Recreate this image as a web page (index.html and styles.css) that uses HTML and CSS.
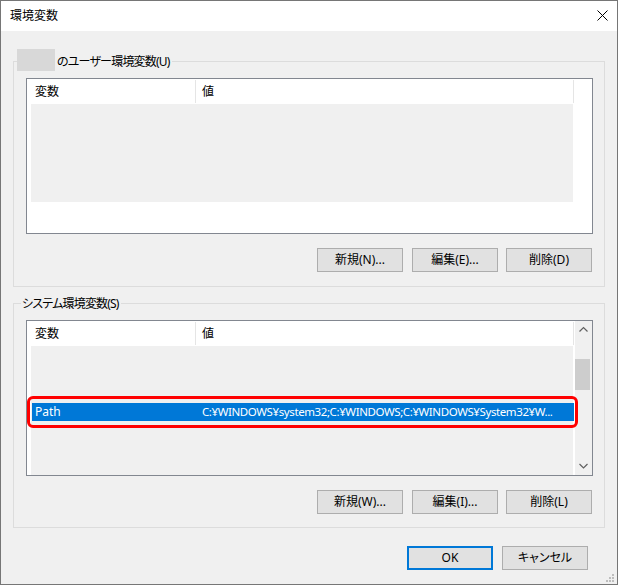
FILE: index.html
```html
<!DOCTYPE html>
<html lang="ja">
<head>
<meta charset="utf-8">
<title>環境変数</title>
<link rel="stylesheet" href="styles.css">
</head>
<body>
<div class="window">
  <div class="titlebar">
    <span class="title">環境変数</span>
    <svg class="close" width="11" height="11" viewBox="0 0 11 11" aria-hidden="true"><path d="M0.5 0.5L10.5 10.5M10.5 0.5L0.5 10.5" stroke="#000" stroke-width="1" fill="none"/></svg>
  </div>
  <div class="body">
    <fieldset class="group group-user">
      <legend class="legend legend-user"><span class="name-redact"></span><span class="legend-text">のユーザー環境変数(U)</span></legend>
      <div class="group-body">
        <div class="list">
          <div class="list-main">
            <div class="list-header">
              <div class="col col-name">変数</div>
              <div class="col col-value">値</div>
            </div>
            <div class="list-rows">
              <div class="redact redact-user"></div>
            </div>
          </div>
        </div>
        <div class="btn-row">
          <button class="btn">新規(N)...</button>
          <button class="btn">編集(E)...</button>
          <button class="btn">削除(D)</button>
        </div>
      </div>
    </fieldset>

    <fieldset class="group group-sys">
      <legend class="legend legend-sys"><span class="legend-text">システム環境変数(S)</span></legend>
      <div class="group-body">
        <div class="list list-sys">
          <div class="list-main">
            <div class="list-header">
              <div class="col col-name">変数</div>
              <div class="col col-value">値</div>
            </div>
            <div class="list-rows">
              <div class="redact redact-sys">
                <div class="row row-selected">
                  <span class="cell-name">Path</span>
                  <span class="cell-value">C:¥WINDOWS¥system32;C:¥WINDOWS;C:¥WINDOWS¥System32¥W...</span>
                </div>
              </div>
            </div>
          </div>
          <div class="scrollbar">
            <div class="sb-arrow">
              <svg width="17" height="17" viewBox="0 0 17 17" aria-hidden="true"><path d="M4.5 10.5L8.5 6.5L12.5 10.5" stroke="#606060" stroke-width="1.2" fill="none"/></svg>
            </div>
            <div class="sb-track"><div class="sb-thumb"></div></div>
            <div class="sb-arrow">
              <svg width="17" height="17" viewBox="0 0 17 17" aria-hidden="true"><path d="M4.5 6L8.5 10L12.5 6" stroke="#606060" stroke-width="1.2" fill="none"/></svg>
            </div>
          </div>
          <div class="highlight"></div>
        </div>
        <div class="btn-row">
          <button class="btn">新規(W)...</button>
          <button class="btn">編集(I)...</button>
          <button class="btn">削除(L)</button>
        </div>
      </div>
    </fieldset>
  </div>
  <div class="dialog-buttons">
    <button class="btn btn-default">OK</button>
    <button class="btn">キャンセル</button>
  </div>
  <svg class="grip" width="12" height="12" viewBox="0 0 12 12" aria-hidden="true">
    <rect x="9" y="3" width="2" height="2" fill="#bdbdbd"/>
    <rect x="6" y="6" width="2" height="2" fill="#bdbdbd"/>
    <rect x="9" y="6" width="2" height="2" fill="#bdbdbd"/>
    <rect x="3" y="9" width="2" height="2" fill="#bdbdbd"/>
    <rect x="6" y="9" width="2" height="2" fill="#bdbdbd"/>
    <rect x="9" y="9" width="2" height="2" fill="#bdbdbd"/>
  </svg>
</div>
</body>
</html>
```

FILE: styles.css
```css
* { box-sizing: border-box; }

html, body {
  margin: 0;
  padding: 0;
  background: #f0f0f0;
}

body {
  font-family: "Noto Sans", "Noto Sans CJK JP", sans-serif;
  font-size: 12px;
  line-height: 16px;
  color: #000;
  font-feature-settings: "palt";
}

.window {
  position: relative;
  width: 618px;
  height: 585px;
  border: 1px solid #767676;
  background: #f0f0f0;
  display: flex;
  flex-direction: column;
}

.titlebar {
  height: 30px;
  background: #fff;
  display: flex;
  align-items: center;
  padding-left: 9px;
  flex: none;
}

.title {
  font-size: 12px;
}

.close {
  margin-left: auto;
  margin-right: 9px;
  margin-top: -1px;
}

.body {
  padding: 0 12px;
}

.group {
  margin: 0;
  padding: 0;
  border: 1px solid #dcdcdc;
  min-width: 0;
}

.group-user { margin-top: 19px; }
.group-sys { margin-top: 5px; }

.legend {
  display: flex;
  align-items: center;
  height: 23px;
  padding: 0;
}

.legend-text {
  letter-spacing: -0.8px;
}

.legend-user { margin-left: 3px; }
.legend-sys { margin-left: 7px; padding: 0 2px 0 1px; }

.name-redact {
  align-self: flex-start;
  width: 38px;
  height: 22px;
  margin-top: -1px;
  background: #d8d8d8;
}

.legend-user .legend-text {
  padding: 0 2px 0 2px;
}

.group-body {
  padding: 5px 11px 14px 12px;
}

.group-sys .group-body {
  padding-bottom: 13px;
}

.list {
  position: relative;
  height: 156px;
  border: 1px solid #828790;
  background: #fff;
  display: flex;
}

.list-main {
  width: 548px;
  display: flex;
  flex-direction: column;
}

.list-header {
  height: 25px;
  display: flex;
  flex: none;
}

.col {
  display: flex;
  align-items: center;
  border-right: 1px solid #e5e5e5;
  margin: 1px 0;
}

.col-name {
  width: 169px;
  padding-left: 8px;
}

.col-value {
  width: 378px;
  padding-left: 6px;
}

.list-rows {
  flex: 1;
  display: flex;
  flex-direction: column;
}

.redact {
  margin-left: 4px;
  width: 542px;
  background: #f0f0f0;
}

.redact-user {
  height: 98px;
}

.redact-sys {
  flex: 1;
  padding-top: 57px;
}

.row {
  display: flex;
  align-items: center;
  height: 18px;
  white-space: nowrap;
}

.row-selected {
  margin-left: 1px;
  width: 542px;
  background: #0078d7;
  color: #fff;
}

.cell-name {
  width: 170px;
  padding-left: 3px;
  flex: none;
}

.cell-value {
  font-size: 11.5px;
  letter-spacing: -0.4px;
}

.scrollbar {
  width: 17px;
  margin-left: auto;
  background: #f0f0f0;
  display: flex;
  flex-direction: column;
}

.sb-arrow {
  height: 17px;
  flex: none;
}

.sb-arrow svg { display: block; }

.sb-track {
  flex: 1;
  padding-top: 21px;
}

.sb-thumb {
  width: 15px;
  height: 31px;
  margin-left: 0;
  background: #cdcdcd;
}

.highlight {
  position: absolute;
  left: 0;
  top: 75px;
  width: 551px;
  height: 32px;
  border: 3px solid #ff0000;
  border-radius: 6px;
  pointer-events: none;
}

.btn-row {
  display: flex;
  justify-content: flex-end;
  gap: 8px;
  margin-top: 14px;
  padding-right: 1px;
}

.btn-row .btn:first-child { margin-right: 1px; }

.btn {
  width: 86px;
  height: 24px;
  margin: 0;
  padding: 0;
  background: #e1e1e1;
  border: 1px solid #adadad;
  font-family: "Noto Sans", "Noto Sans CJK JP", sans-serif;
  font-size: 12px;
  line-height: 16px;
  color: #000;
  font-feature-settings: "palt";
}

.btn-default {
  border: 2px solid #0078d7;
}

.dialog-buttons {
  display: flex;
  justify-content: flex-end;
  gap: 9px;
  margin-top: 18px;
  padding-right: 29px;
}

.grip {
  position: absolute;
  right: 2px;
  bottom: 1px;
}
```
